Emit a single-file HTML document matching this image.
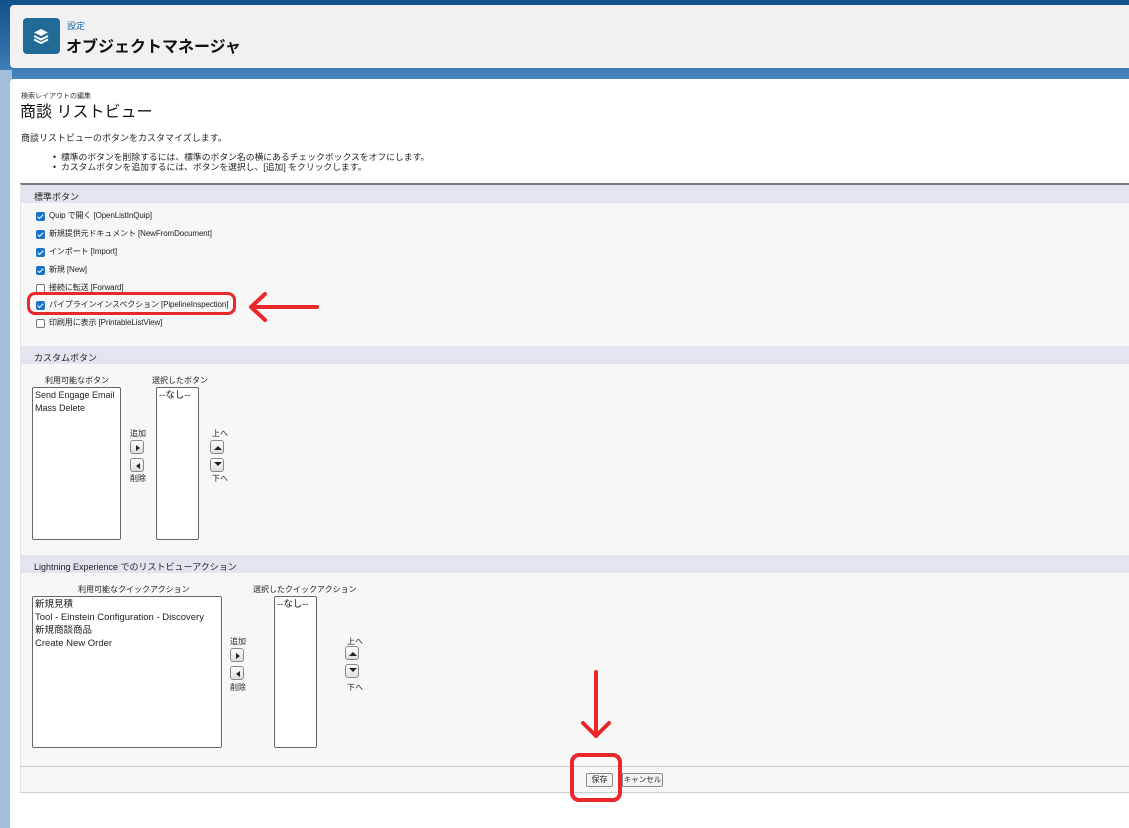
<!DOCTYPE html>
<html><head><meta charset="utf-8"><style>
*{margin:0;padding:0;box-sizing:border-box}
body{width:1129px;height:828px;position:relative;overflow:hidden;background:#1e5a92;font-family:"Liberation Sans","Noto Sans CJK JP",sans-serif;color:#222}
.a{position:absolute}
.t{font-size:9px;white-space:nowrap}
.l{font-size:8px;letter-spacing:-0.1px}
.box{position:absolute;border:1px solid #666;background:#fff;border-radius:2px;font-size:9.5px;padding:1px 2px;line-height:13px;white-space:nowrap;overflow:hidden}
.btn{position:absolute;width:14px;height:14px;border:1px solid #888;border-radius:3px;background:linear-gradient(#fff,#ddd)}
.cb{position:absolute;width:9px;height:9px;border-radius:2px}
.on{background:#1a73c9}
.on::after{content:"";position:absolute;left:3px;top:1px;width:2px;height:5px;border:solid #fff;border-width:0 1.5px 1.5px 0;transform:rotate(45deg)}
.off{border:1px solid #777;background:#fff}
.hd{position:absolute;left:20px;right:0;height:18px;background:#e2e4ee;font-size:9px;padding:5px 0 0 14px}
</style></head><body>
<div class="a" style="left:0;top:0;width:1129px;height:80px;background:linear-gradient(#14508a,#2a6aa6 55%,#4a86bc)"></div>
<div class="a" style="left:0;top:70px;width:12px;height:758px;background:#a2bcd9"></div>
<div class="a" style="left:10px;top:5px;width:1119px;height:63px;background:#f1f1f1;border-radius:4px 0 0 4px"></div>
<div class="a" style="left:23px;top:18px;width:37px;height:36px;background:#1f6a97;border-radius:4px"></div>
<svg class="a" style="left:31px;top:26px" width="20" height="20" viewBox="0 0 20 20"><path d="M10 3 L17 6.5 L10 10 L3 6.5Z" fill="#fff"/><path d="M3 10 L10 13.5 L17 10" stroke="#fff" stroke-width="2" fill="none"/><path d="M3 13.5 L10 17 L17 13.5" stroke="#fff" stroke-width="2" fill="none"/></svg>
<div class="a" style="left:67px;top:19px;font-size:9px;color:#1a66b0">設定</div>
<div class="a" style="left:66px;top:33px;font-size:16px;font-weight:bold;color:#111">オブジェクトマネージャ</div>
<div class="a" style="left:10px;top:79px;width:1119px;height:749px;background:#fff;border-radius:4px 0 0 0"></div>
<div class="a" style="left:21px;top:91px;font-size:7px;color:#333">検索レイアウトの編集</div>
<div class="a" style="left:20px;top:98px;font-size:16px;color:#111">商談 リストビュー</div>
<div class="a t" style="left:21px;top:131px">商談リストビューのボタンをカスタマイズします。</div>
<div class="a t" style="left:53px;top:152px;line-height:10px;font-size:8.8px">•&nbsp;&nbsp;標準のボタンを削除するには、標準のボタン名の横にあるチェックボックスをオフにします。<br>•&nbsp;&nbsp;カスタムボタンを追加するには、ボタンを選択し、[追加] をクリックします。</div>
<div class="a" style="left:20px;top:183px;width:1109px;height:610px;background:#f7f7f7;border-top:2px solid #747780;border-bottom:1px solid #ccc;border-left:1px solid #e3e3e3"></div>
<div class="hd" style="top:185px">標準ボタン</div>
<div class="cb on" style="left:36px;top:212px"></div><div class="a t l" style="left:49px;top:210px">Quip で開く [OpenListInQuip]</div>
<div class="cb on" style="left:36px;top:230px"></div><div class="a t l" style="left:49px;top:228px">新規提供元ドキュメント [NewFromDocument]</div>
<div class="cb on" style="left:36px;top:248px"></div><div class="a t l" style="left:49px;top:246px">インポート [Import]</div>
<div class="cb on" style="left:36px;top:266px"></div><div class="a t l" style="left:49px;top:264px">新規 [New]</div>
<div class="cb off" style="left:36px;top:284px"></div><div class="a t l" style="left:49px;top:282px">接続に転送 [Forward]</div>
<div class="cb on" style="left:36px;top:301px"></div><div class="a t l" style="left:49px;top:299px">パイプラインインスペクション [PipelineInspection]</div>
<div class="cb off" style="left:36px;top:319px"></div><div class="a t l" style="left:49px;top:317px">印刷用に表示 [PrintableListView]</div>
<div class="a" style="left:27px;top:292px;width:209px;height:23px;border:3px solid #e8282a;border-radius:8px"></div>
<svg class="a" style="left:245px;top:290px" width="75" height="34"><path d="M72 17 H8 M20 4 L6 17 L20 30" stroke="#e8282a" stroke-width="4" fill="none" stroke-linecap="round" stroke-linejoin="round"/></svg>
<div class="hd" style="top:346px">カスタムボタン</div>
<div class="a t" style="left:45px;top:375px;font-size:8px">利用可能なボタン</div>
<div class="a t" style="left:152px;top:375px;font-size:8px">選択したボタン</div>
<div class="box" style="left:32px;top:387px;width:89px;height:153px;font-size:9px">Send Engage Email<br>Mass Delete</div>
<div class="box" style="left:156px;top:387px;width:43px;height:153px">--なし--</div>
<div class="a t" style="left:130px;top:428px;font-size:8px">追加</div>
<div class="btn" style="left:130px;top:440px"></div><div class="btn" style="left:130px;top:458px"></div>
<div class="a t" style="left:130px;top:473px;font-size:8px">削除</div>
<div class="a t" style="left:212px;top:428px;font-size:8px">上へ</div>
<div class="btn" style="left:210px;top:440px"></div><div class="btn" style="left:210px;top:458px"></div>
<div class="a t" style="left:212px;top:473px;font-size:8px">下へ</div>
<div class="hd" style="top:555px">Lightning Experience でのリストビューアクション</div>
<div class="a t" style="left:78px;top:584px;font-size:8px">利用可能なクイックアクション</div>
<div class="a t" style="left:253px;top:584px;font-size:8px">選択したクイックアクション</div>
<div class="box" style="left:32px;top:596px;width:190px;height:152px">新規見積<br>Tool - Einstein Configuration - Discovery<br>新規商談商品<br>Create New Order</div>
<div class="box" style="left:274px;top:596px;width:43px;height:152px">--なし--</div>
<div class="a t" style="left:230px;top:636px;font-size:8px">追加</div>
<div class="btn" style="left:230px;top:648px"></div><div class="btn" style="left:230px;top:666px"></div>
<div class="a t" style="left:230px;top:682px;font-size:8px">削除</div>
<div class="a t" style="left:347px;top:636px;font-size:8px">上へ</div>
<div class="btn" style="left:345px;top:646px"></div><div class="btn" style="left:345px;top:664px"></div>
<div class="a t" style="left:347px;top:682px;font-size:8px">下へ</div>
<div class="a" style="left:20px;top:766px;width:1109px;height:1px;background:#ccc"></div>
<div class="a t" style="left:586px;top:773px;width:27px;height:14px;border:1px solid #888;border-radius:2px;background:#f4f4f4;font-size:8px;text-align:center;line-height:12px">保存</div>
<div class="a t" style="left:622px;top:773px;width:41px;height:14px;border:1px solid #888;border-radius:2px;background:#f4f4f4;font-size:7.5px;text-align:center;line-height:12px">キャンセル</div>
<div class="a" style="left:570px;top:753px;width:52px;height:49px;border:4px solid #e8282a;border-radius:9px"></div>
<svg class="a" style="left:578px;top:668px" width="40" height="76"><path d="M18 4 V68 M5 55 L18 68 L31 55" stroke="#e8282a" stroke-width="4" fill="none" stroke-linecap="round" stroke-linejoin="round"/></svg>
<svg class="a" style="left:131px;top:441px" width="14" height="30"><path d="M5 4 L9 7 L5 10Z M9 22 L5 25 L9 28Z" fill="#222"/></svg>
<svg class="a" style="left:211px;top:441px" width="14" height="30"><path d="M3 9 L7 5 L11 9Z M3 21 L11 21 L7 25Z" fill="#222"/></svg>
<svg class="a" style="left:231px;top:649px" width="14" height="30"><path d="M5 4 L9 7 L5 10Z M9 22 L5 25 L9 28Z" fill="#222"/></svg>
<svg class="a" style="left:346px;top:647px" width="14" height="30"><path d="M3 9 L7 5 L11 9Z M3 21 L11 21 L7 25Z" fill="#222"/></svg>
</body></html>
